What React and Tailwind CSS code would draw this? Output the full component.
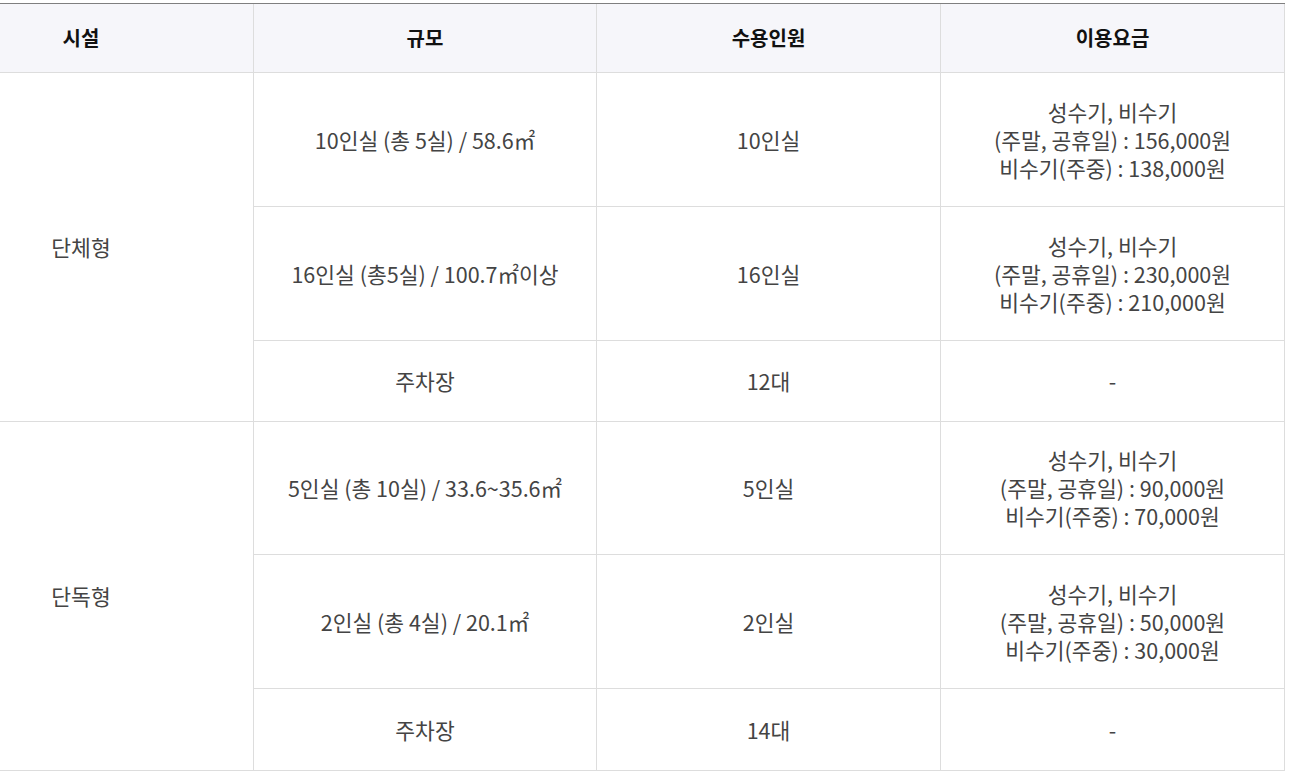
import React from "react";

const font = { fontFamily: '"Noto Sans CJK KR", "Noto Sans", sans-serif' };

function Cell({ children, w }) {
  return (
    <div
      className={`${w} shrink-0 flex items-center justify-center text-center border-r border-[#dddddd] leading-[28px]`}
    >
      <div>{children}</div>
    </div>
  );
}

function Fee({ a, b }) {
  return (
    <>
      <div>성수기, 비수기</div>
      <div>(주말, 공휴일) : {a}원</div>
      <div>비수기(주중) : {b}원</div>
    </>
  );
}

function Row({ h, scale, cap, fee }) {
  return (
    <div className={`flex ${h} border-b border-[#dddddd]`}>
      <Cell w="w-[343px]">{scale}</Cell>
      <Cell w="w-[344px]">{cap}</Cell>
      <Cell w="w-[344px]">{fee}</Cell>
    </div>
  );
}

function Group({ label, rows }) {
  return (
    <div className="flex">
      <div className="w-[254px] shrink-0 border-r border-b border-[#dddddd] flex items-center pr-[91px] justify-center">
        <span>{label}</span>
      </div>
      <div className="flex flex-col">
        {rows.map((r, i) => (
          <Row key={i} {...r} />
        ))}
      </div>
    </div>
  );
}

export default function App() {
  return (
    <div className="w-[1290px] h-[776px] bg-white pt-[3px] text-[21.5px] text-[#444444]" style={font}>
      <div className="w-[1285px]">
        <div className="flex h-[70px] bg-[#f6f6fa] border-t border-t-[#7f7f7f] border-b border-b-[#dddddd] font-bold text-[20px] text-[#111111]">
          <div className="w-[254px] shrink-0 border-r border-[#dddddd] flex items-center justify-center pr-[91px]">
            시설
          </div>
          <div className="w-[343px] shrink-0 border-r border-[#dddddd] flex items-center justify-center">
            규모
          </div>
          <div className="w-[344px] shrink-0 border-r border-[#dddddd] flex items-center justify-center">
            수용인원
          </div>
          <div className="w-[344px] shrink-0 border-r border-[#dddddd] flex items-center justify-center">
            이용요금
          </div>
        </div>
        <Group
          label="단체형"
          rows={[
            { h: "h-[134px]", scale: "10인실 (총 5실) / 58.6㎡", cap: "10인실", fee: <Fee a="156,000" b="138,000" /> },
            { h: "h-[134px]", scale: "16인실 (총5실) / 100.7㎡이상", cap: "16인실", fee: <Fee a="230,000" b="210,000" /> },
            { h: "h-[81px]", scale: "주차장", cap: "12대", fee: "-" },
          ]}
        />
        <Group
          label="단독형"
          rows={[
            { h: "h-[133px]", scale: "5인실 (총 10실) / 33.6~35.6㎡", cap: "5인실", fee: <Fee a="90,000" b="70,000" /> },
            { h: "h-[134px]", scale: "2인실 (총 4실) / 20.1㎡", cap: "2인실", fee: <Fee a="50,000" b="30,000" /> },
            { h: "h-[82px]", scale: "주차장", cap: "14대", fee: "-" },
          ]}
        />
      </div>
    </div>
  );
}
